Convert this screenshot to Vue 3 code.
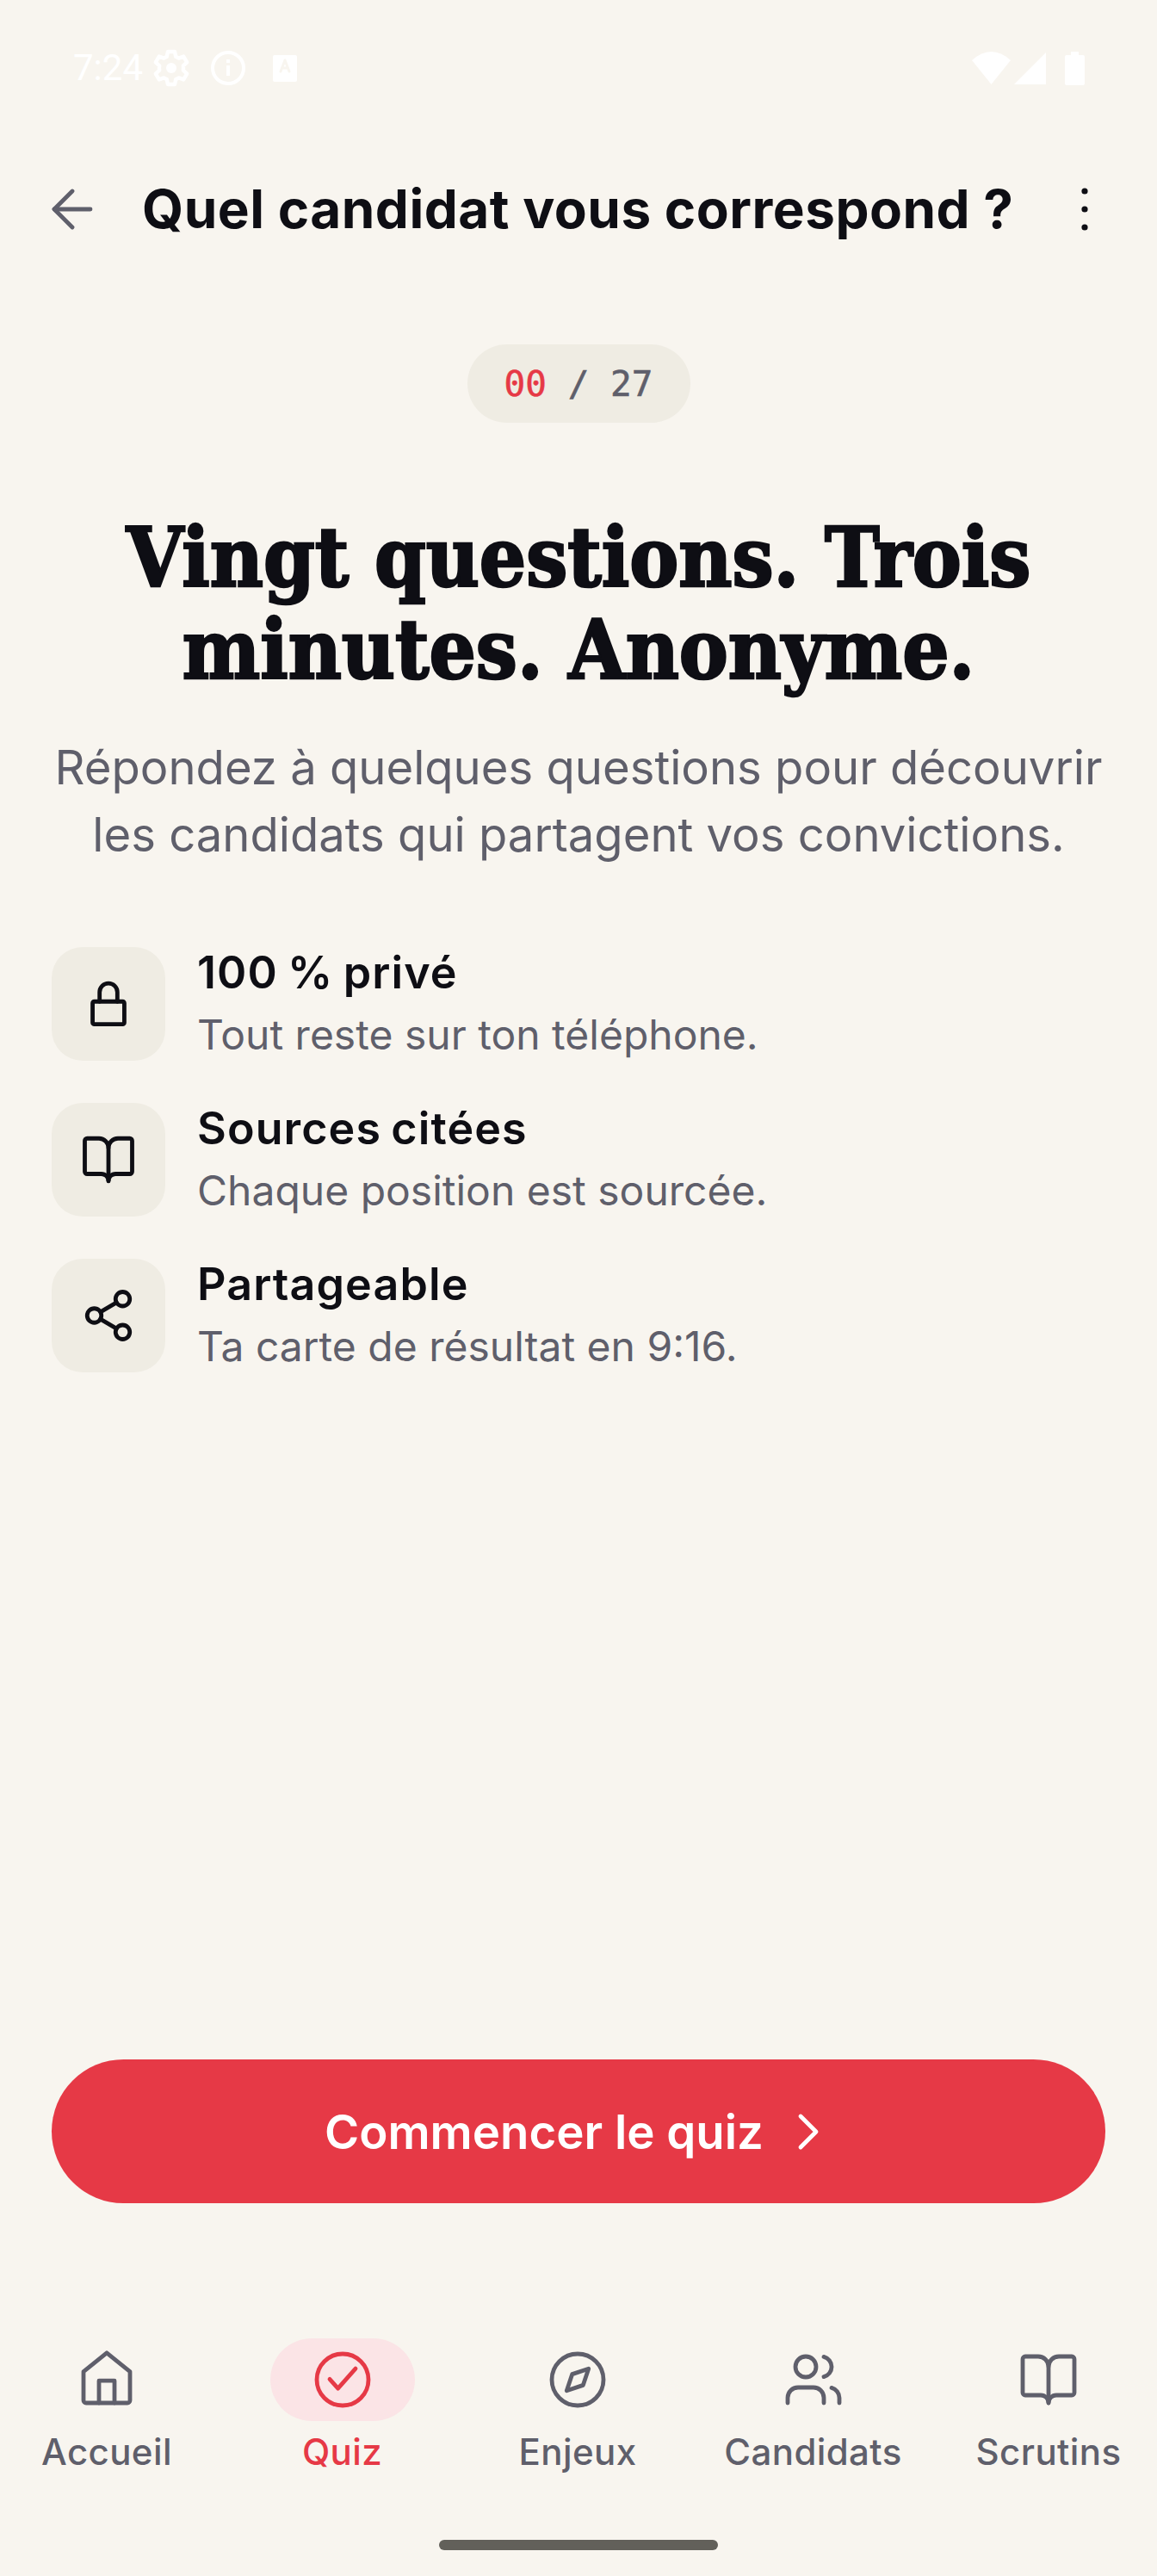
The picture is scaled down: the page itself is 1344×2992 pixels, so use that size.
<script setup>
const features = [
  {
    title: "100 % privé",
    text: "Tout reste sur ton téléphone.",
    paths: [
      "M6 11h12a.7.7 0 0 1 .7.7v8.2a.7.7 0 0 1-.7.7H6a.7.7 0 0 1-.7-.7v-8.2a.7.7 0 0 1 .7-.7z",
      "M8.25 11V7.05a3.75 3.75 0 0 1 7.5 0V11",
    ],
  },
  {
    title: "Sources citées",
    text: "Chaque position est sourcée.",
    paths: [
      "M12 7v14",
      "M3 18a1 1 0 0 1-1-1V4a1 1 0 0 1 1-1h5a4 4 0 0 1 4 4 4 4 0 0 1 4-4h5a1 1 0 0 1 1 1v13a1 1 0 0 1-1 1h-6a3 3 0 0 0-3 3 3 3 0 0 0-3-3z",
    ],
  },
  {
    title: "Partageable",
    text: "Ta carte de résultat en 9:16.",
    paths: [
      "M21 5a3 3 0 1 1-6 0 3 3 0 0 1 6 0z",
      "M9 12a3 3 0 1 1-6 0 3 3 0 0 1 6 0z",
      "M21 19a3 3 0 1 1-6 0 3 3 0 0 1 6 0z",
      "M8.6 13.5l6.8 4",
      "M15.4 6.5l-6.8 4",
    ],
  },
];

const circle = "M22 12a10 10 0 1 1-20 0 10 10 0 0 1 20 0z";

const tabs = [
  {
    label: "Accueil",
    paths: [
      "M3 8.9 12 1.6l9 7.3V20a1 1 0 0 1-1 1H4a1 1 0 0 1-1-1z",
      "M9 21v-8.6h6V21",
    ],
  },
  {
    label: "Quiz",
    active: true,
    paths: [circle, "M7 11.8l3.2 3.6L17 7.7"],
  },
  {
    label: "Enjeux",
    paths: [circle, "M16.24 7.76l-2.12 6.36-6.36 2.12 2.12-6.36z"],
  },
  {
    label: "Candidats",
    paths: [
      "M16 21v-2a4 4 0 0 0-4-4H6a4 4 0 0 0-4 4v2",
      "M13 7a4 4 0 1 1-8 0 4 4 0 0 1 8 0z",
      "M22 21v-2a4 4 0 0 0-3-3.87",
      "M16 3.13a4 4 0 0 1 0 7.75",
    ],
  },
  {
    label: "Scrutins",
    paths: [
      "M12 7v14",
      "M3 18a1 1 0 0 1-1-1V4a1 1 0 0 1 1-1h5a4 4 0 0 1 4 4 4 4 0 0 1 4-4h5a1 1 0 0 1 1 1v13a1 1 0 0 1-1 1h-6a3 3 0 0 0-3 3 3 3 0 0 0-3-3z",
    ],
  },
];
</script>

<template>
  <div class="screen">
    <div class="status">
      <div class="status-left">
        <span class="time">7:24</span>
        <svg class="gear" viewBox="0 0 24 24">
          <path d="M10 2.500h4l.6 2.900 1.700.9 2.800-1 2 3.400-2.200 2a6 6 0 0 1 0 2.600l2.200 2-2 3.400-2.800-1-1.700.9-.6 2.900h-4l-.6-2.900-1.700-.9-2.800 1-2-3.400 2.200-2a6 6 0 0 1 0-2.600l-2.200-2 2-3.400 2.800 1 1.700-.9z" />
          <circle class="gear-dot" cx="12" cy="12" r="3" />
        </svg>
        <svg class="info" viewBox="0 0 40 40">
          <circle cx="20" cy="20" r="18" />
          <path d="M20 17v12M20 10v4" />
        </svg>
        <svg class="store" viewBox="0 0 28 31">
          <path class="store-bg" d="M2 0h24a2 2 0 0 1 2 2v27a2 2 0 0 1-2 2H2a2 2 0 0 1-2-2V2a2 2 0 0 1 2-2z" />
          <path class="store-a" d="M9 19l5-13 5 13M10.500 15h7" />
        </svg>
      </div>
      <div class="status-right">
        <svg class="wifi" viewBox="0 0 45 38"><path d="M0 10Q22.500-10 45 10L22.500 38z" /></svg>
        <svg class="signal" viewBox="0 0 37 37"><path d="M37 0v37H0z" /></svg>
        <svg class="battery" viewBox="0 0 23 39">
          <path d="M7 0h9v4h5a2 2 0 0 1 2 2v31a2 2 0 0 1-2 2H2a2 2 0 0 1-2-2V6a2 2 0 0 1 2-2h5z" />
        </svg>
      </div>
    </div>

    <header class="topbar">
      <svg class="back" viewBox="0 0 24 24">
        <path d="M12 19l-7-7 7-7" />
        <path d="M19 12H5" />
      </svg>
      <h1 class="title">Quel candidat vous correspond ?</h1>
      <svg class="more" viewBox="0 0 24 24">
        <circle cx="12" cy="5" r="1.200" />
        <circle cx="12" cy="12" r="1.200" />
        <circle cx="12" cy="19" r="1.200" />
      </svg>
    </header>

    <main class="content">
      <div class="counter"><b>00</b> / 27</div>
      <h2 class="headline">Vingt questions. Trois<br />minutes. Anonyme.</h2>
      <p class="intro">Répondez à quelques questions pour découvrir<br />les candidats qui partagent vos convictions.</p>

      <ul class="features">
        <li v-for="f in features" :key="f.title" class="feature">
          <div class="tile">
            <svg viewBox="0 0 24 24"><path v-for="d in f.paths" :key="d" :d="d" /></svg>
          </div>
          <div class="feature-text">
            <div class="feature-title">{{ f.title }}</div>
            <div class="feature-sub">{{ f.text }}</div>
          </div>
        </li>
      </ul>
    </main>

    <button class="start">
      <span>Commencer le quiz</span>
      <svg viewBox="0 0 24 24"><path d="M9 18l6-6-6-6" /></svg>
    </button>

    <nav class="tabs">
      <div v-for="t in tabs" :key="t.label" class="tab" :class="{ active: t.active }">
        <div class="tab-icon">
          <svg viewBox="0 0 24 24"><path v-for="d in t.paths" :key="d" :d="d" /></svg>
        </div>
        <span>{{ t.label }}</span>
      </div>
    </nav>

    <div class="home-row"><div class="home-bar"></div></div>
  </div>
</template>

<style scoped>
.screen {
  width: 1344px;
  height: 2992px;
  display: flex;
  flex-direction: column;
  background: #f8f5ef;
  color: #0e0e14;
  font-family: Inter, "Noto Sans", sans-serif;
  overflow: hidden;
}

svg {
  display: block;
  fill: none;
  stroke: currentColor;
  stroke-width: 1.6;
  stroke-linecap: round;
  stroke-linejoin: round;
}

.status {
  height: 156px;
  flex: none;
  display: flex;
  align-items: center;
  justify-content: space-between;
  padding: 2px 84px 0 85px;
  box-sizing: border-box;
  color: #fff;
}

.status-left,
.status-right {
  display: flex;
  align-items: center;
}

.time {
  font-family: Roboto, sans-serif;
  font-size: 42px;
  line-height: 1;
  width: 90px;
}

.gear {
  width: 48px;
  height: 48px;
  stroke-width: 2.2;
}

.gear-dot {
  fill: #fff;
  stroke: none;
}

.info {
  width: 40px;
  height: 40px;
  margin-left: 22px;
  stroke-width: 4;
  stroke-linecap: butt;
}

.store {
  width: 28px;
  height: 31px;
  margin-left: 32px;
}

.store-bg {
  fill: #fff;
  stroke: none;
}

.store-a {
  stroke: #f8f5ef;
  stroke-width: 3;
}

.status-right svg {
  fill: #fff;
  stroke: none;
}

.wifi {
  width: 45px;
  height: 38px;
}

.signal {
  width: 37px;
  height: 37px;
  margin-left: 4px;
}

.battery {
  width: 23px;
  height: 39px;
  margin-left: 22px;
}

.topbar {
  height: 174px;
  flex: none;
  display: flex;
  align-items: center;
  padding: 0 48px;
}

.back {
  width: 72px;
  height: 72px;
  color: #5f5f6b;
}

.title {
  margin: 0 0 0 45px;
  flex: 1;
  font-size: 62px;
  font-weight: 700;
  letter-spacing: 0.5px;
  line-height: 1;
  white-space: nowrap;
}

.more {
  width: 72px;
  height: 72px;
  fill: currentColor;
  stroke: none;
}

.content {
  flex: 1;
  padding: 70px 60px 0;
  display: flex;
  flex-direction: column;
  align-items: center;
}

.counter {
  width: 259px;
  height: 91px;
  border-radius: 46px;
  background: #efece3;
  display: flex;
  align-items: center;
  justify-content: center;
  font-family: "DejaVu Sans Mono", monospace;
  font-size: 41px;
  color: #5f5f6b;
  white-space: pre;
  -webkit-text-stroke: 0.6px currentColor;
}

.counter b {
  font-weight: 400;
  color: #e63946;
}

.headline {
  margin: 103px 0 0;
  font-family: "DejaVu Serif Condensed", "DejaVu Serif", serif;
  font-stretch: condensed;
  font-weight: 700;
  font-size: 95px;
  line-height: 107px;
  text-align: center;
  white-space: nowrap;
  -webkit-text-stroke: 2.5px currentColor;
}

.intro {
  margin: 44px 0 0;
  font-size: 54.4px;
  line-height: 78px;
  color: #5f5f6b;
  text-align: center;
  white-space: nowrap;
}

.features {
  list-style: none;
  align-self: stretch;
  margin: 92px 0 0;
  padding: 0;
  display: flex;
  flex-direction: column;
  gap: 49px;
}

.feature {
  height: 132px;
  display: flex;
  align-items: flex-start;
  gap: 37px;
}

.tile {
  width: 132px;
  height: 132px;
  border-radius: 36px;
  background: #efece3;
  display: flex;
  align-items: center;
  justify-content: center;
}

.tile svg {
  width: 66px;
  height: 66px;
  stroke-width: 1.75;
}

.feature-text {
  padding-top: 2px;
}

.feature-title {
  font-size: 52px;
  font-weight: 600;
  letter-spacing: 1.1px;
  word-spacing: -3px;
  line-height: 56px;
}

.feature-sub {
  margin-top: 16px;
  font-size: 48px;
  line-height: 56px;
  color: #5f5f6b;
}

.start {
  flex: none;
  margin: 0 60px;
  height: 167px;
  border: none;
  border-radius: 84px;
  background: #e63946;
  color: #fff;
  display: flex;
  align-items: center;
  justify-content: center;
  gap: 16px;
  font-family: inherit;
  font-size: 54.6px;
  font-weight: 600;
}

.start span {
  margin-left: 8px;
}

.start svg {
  width: 72px;
  height: 72px;
}

.tabs {
  flex: none;
  margin-top: 157px;
  padding: 0 32px 0 30px;
  display: flex;
  justify-content: space-between;
}

.tab {
  width: 188px;
  display: flex;
  flex-direction: column;
  align-items: center;
  gap: 10px;
  color: #5f5f6b;
  font-size: 42px;
  font-weight: 500;
  letter-spacing: 0.4px;
  line-height: 52px;
  white-space: nowrap;
}

.tab-icon {
  width: 168px;
  height: 96px;
  border-radius: 48px;
  display: flex;
  align-items: center;
  justify-content: center;
}

.tab-icon svg {
  width: 72px;
  height: 72px;
}

.tab.active {
  color: #e63946;
}

.tab.active .tab-icon {
  background: #fbe4e6;
}

.home-row {
  flex: none;
  height: 118px;
  display: flex;
  justify-content: center;
  padding-top: 76px;
  box-sizing: border-box;
}

.home-bar {
  width: 324px;
  height: 12px;
  border-radius: 6px;
  background: #62605a;
}
</style>
